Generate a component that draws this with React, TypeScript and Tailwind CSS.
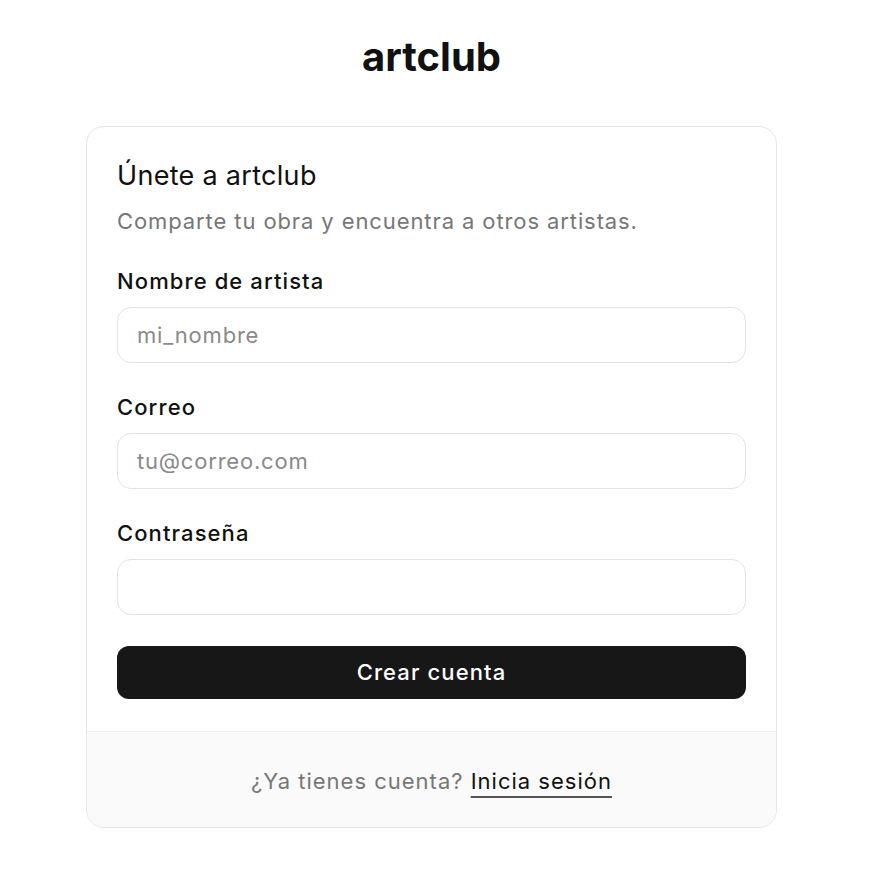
import React from 'react';

const fields = [
  { label: 'Nombre de artista', placeholder: 'mi_nombre', type: 'text' },
  { label: 'Correo', placeholder: 'tu@correo.com', type: 'email' },
  { label: 'Contraseña', placeholder: '', type: 'password' },
];

const App = () => {
  return (
    <div className="min-h-screen bg-white font-['Inter',sans-serif] text-[#111]">
      <div className="w-[863px] flex flex-col items-center pt-[33px]">
        <h1 className="text-[40px] leading-[48px] font-bold text-[#111]">artclub</h1>

        <div className="mt-[45px] w-[691px] rounded-[18px] border border-[#e6e6e6] bg-white overflow-hidden">
          <div className="px-[30px] pt-[32px] pb-[32px]">
            <h2 className="text-[27px] leading-[34px] font-normal tracking-[0.3px] text-[#111]">Únete a artclub</h2>
            <p className="mt-[15px] text-[22px] leading-[26px] tracking-[0.9px] text-[#777]">
              Comparte tu obra y encuentra a otros artistas.
            </p>

            <form className="mt-[33px] flex flex-col gap-[30px]" onSubmit={(e) => e.preventDefault()}>
              {fields.map((f) => (
                <div key={f.label} className="flex flex-col">
                  <label className="text-[22px] leading-[28px] font-medium tracking-[1.1px] text-[#111]">{f.label}</label>
                  <input
                    type={f.type}
                    placeholder={f.placeholder}
                    className="mt-[12px] h-[56px] w-full rounded-[14px] border border-[#e3e3e3] bg-white px-[19px] text-[22px] tracking-[0.8px] text-[#111] placeholder:text-[#8a8a8a] outline-none"
                  />
                </div>
              ))}
              <button
                type="submit"
                className="mt-[1px] h-[53px] w-full rounded-[12px] bg-[#171717] text-[22px] font-medium tracking-[1.1px] text-white"
              >
                Crear cuenta
              </button>
            </form>
          </div>

          <div className="border-t border-[#ececec] bg-[#fafafa] h-[96px] flex items-center justify-center">
            <p className="text-[22px] tracking-[1px] text-[#777] pt-[4px]">
              ¿Ya tienes cuenta?{' '}
              <a href="#" className="text-[#111] underline decoration-[#555] decoration-2 underline-offset-[7px]">
                Inicia sesión
              </a>
            </p>
          </div>
        </div>
      </div>
    </div>
  );
};

export default App;
